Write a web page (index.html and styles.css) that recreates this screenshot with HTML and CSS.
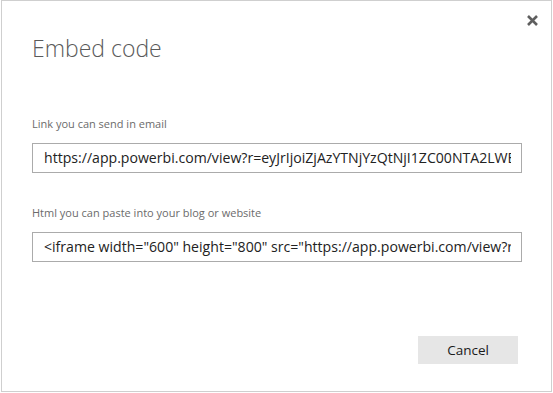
FILE: index.html
```html
<!DOCTYPE html>
<html lang="en">
<head>
  <meta charset="UTF-8" />
  <title>Embed code</title>
  <link rel="stylesheet" href="styles.css">
</head>
<body>
  <div class="dialog">
    <div class="dialog-header">
      <h1 class="dialog-title">Embed code</h1>
      <button class="close-btn" aria-label="Close">
        <svg width="11" height="11" viewBox="0 0 11 11">
          <path d="M1 1 L10 10 M10 1 L1 10" stroke="#5f5f5f" stroke-width="2.6" stroke-linecap="butt" />
        </svg>
      </button>
    </div>

    <div class="dialog-body">
      <label class="field-label">Link you can send in email</label>
      <input class="field-input" type="text" readonly
             value="https://app.powerbi.com/view?r=eyJrIjoiZjAzYTNjYzQtNjI1ZC00NTA2LWEzNDktMzE2Yjg4ZTA2MjQ1IiwidCI6IjcyZjk4OGJm">

      <label class="field-label second">Html you can paste into your blog or website</label>
      <input class="field-input" type="text" readonly
             value='&lt;iframe width="600" height="800" src="https://app.powerbi.com/view?r=eyJrIjoiZjAzYTNjYzQtNjI1ZC00NTA2LWE" frameborder="0" allowFullScreen="true"&gt;&lt;/iframe&gt;'>
    </div>

    <div class="dialog-footer">
      <button class="btn-cancel">Cancel</button>
    </div>
  </div>
</body>
</html>
```

FILE: styles.css
```css
body {
  margin: 0;
  background: #fff;
  font-family: "Open Sans", "Noto Sans", sans-serif;
}

.dialog {
  box-sizing: border-box;
  width: 551px;
  height: 392px;
  margin-left: 1px;
  border: 1px solid #cfcfcf;
  background: #fff;
  display: flex;
  flex-direction: column;
}

/* En-tete : titre + croix */
.dialog-header {
  display: flex;
  justify-content: space-between;
  align-items: flex-start;
  padding: 0 13px 0 30px;
}

.dialog-title {
  margin: 31px 0 0 0;
  font-size: 23px;
  font-weight: 300;
  line-height: 32px;
  color: #5a5a5a;
}

.close-btn {
  margin-top: 14px;
  padding: 0;
  width: 11px;
  height: 11px;
  border: none;
  background: none;
  display: flex;
}

/* Champs */
.dialog-body {
  display: flex;
  flex-direction: column;
  padding: 0 28px 0 30px;
  margin-top: 52px;
}

.field-label {
  font-size: 11px;
  line-height: 16px;
  color: #6b6b6b;
}

.field-label.second {
  margin-top: 32px;
}

.field-input {
  box-sizing: border-box;
  margin-top: 11px;
  height: 30px;
  width: 490px;
  border: 1px solid #ababab;
  padding: 0 10px 1px 11px;
  font-family: "Open Sans", "Noto Sans", sans-serif;
  font-size: 14.1px;
  color: #222;
  background: #fff;
  outline: none;
}

/* Pied : bouton Annuler */
.dialog-footer {
  margin-top: auto;
  display: flex;
  justify-content: flex-end;
  padding: 0 33px 27px 0;
}

.btn-cancel {
  width: 100px;
  height: 28px;
  border: none;
  background: #e6e6e6;
  font-family: "Open Sans", "Noto Sans", sans-serif;
  font-size: 13.5px;
  color: #1a1a1a;
  padding: 0;
}
```
